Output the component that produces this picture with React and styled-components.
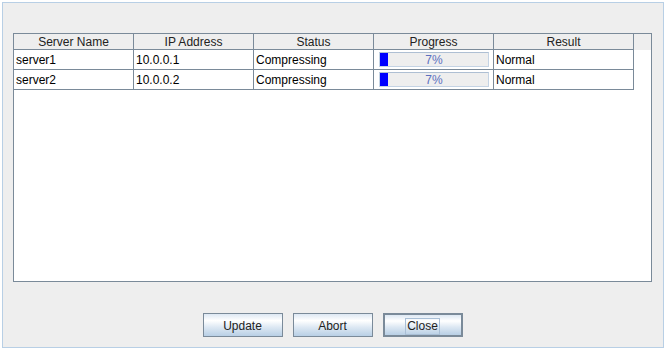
import React from 'react';
import styled, { createGlobalStyle } from 'styled-components';

const GlobalStyle = createGlobalStyle`
  html, body {
    margin: 0;
    padding: 0;
    background: #ffffff;
  }
  body {
    font-family: "Liberation Sans", Arial, sans-serif;
    font-size: 12px;
  }
`;

// the dialog frame with the light blue Metal edge
const Frame = styled.div`
  box-sizing: border-box;
  margin: 2px;
  width: 662px;
  height: 346px;
  border: 1px solid #b8cfe5;
  background: #eeeeee;
  padding: 30px 11px 10px 10px;
  display: flex;
  flex-direction: column;
`;

const ScrollPane = styled.div`
  box-sizing: border-box;
  width: 639px;
  height: 249px;
  border: 1px solid #7a8a99;
  background: #ffffff;
  display: flex;
  flex-direction: column;
`;

const HeaderRow = styled.div`
  display: flex;
  height: 16px;
  background: #eeeeee;
`;

const HeaderCell = styled.div`
  box-sizing: border-box;
  width: ${(p) => p.$w}px;
  height: 16px;
  border-right: 1px solid #7a8a99;
  border-bottom: 1px solid #7a8a99;
  display: flex;
  align-items: center;
  justify-content: center;
  padding-top: 1px;
  color: #222222;
  line-height: 14px;
`;

const Row = styled.div`
  display: flex;
  height: 20px;
`;

const Cell = styled.div`
  box-sizing: border-box;
  width: ${(p) => p.$w}px;
  height: 20px;
  border-right: 1px solid #7a8a99;
  border-bottom: 1px solid #7a8a99;
  display: flex;
  align-items: center;
  padding: 1px 0 0 2px;
  color: #000000;
  white-space: nowrap;
`;

const BarCell = styled(Cell)`
  padding: 0 0 0 5px;
`;

const Bar = styled.div`
  position: relative;
  box-sizing: border-box;
  width: 110px;
  height: 15px;
  border: 1px solid #c4d3e4;
  border-top-color: #aebfd3;
  background: #eeeeee;
  display: flex;
`;

const Fill = styled.div`
  height: 100%;
  background: #0000ff;
`;

// text sits over the fill, as Metal paints it
const BarText = styled.span`
  position: absolute;
  inset: 0;
  display: flex;
  align-items: center;
  justify-content: center;
  padding-top: 1px;
  color: #5d70c0;
  font-size: 12px;
`;

const ButtonBar = styled.div`
  margin-top: auto;
  display: flex;
  justify-content: center;
  gap: 10px;
`;

const Button = styled.button`
  box-sizing: border-box;
  width: 80px;
  height: 24px;
  margin: 0;
  padding: 2px 0 0;
  border: ${(p) => (p.$default ? '2px' : '1px')} solid #7a8a99;
  background: linear-gradient(#dde8f3 0%, #ffffff 30%, #dde8f3 60%, #b8cfe5 100%);
  font-family: "Liberation Sans", Arial, sans-serif;
  font-size: 12px;
  color: #222222;
  display: flex;
  align-items: center;
  justify-content: center;
`;

const Focus = styled.span`
  border: 1px solid #a9bfd6;
  padding: 0 1px;
  line-height: 15px;
`;

const columns = [
  { name: 'Server Name', w: 120 },
  { name: 'IP Address', w: 120 },
  { name: 'Status', w: 120 },
  { name: 'Progress', w: 120 },
  { name: 'Result', w: 140 },
];

const servers = [
  { name: 'server1', ip: '10.0.0.1', status: 'Compressing', progress: 7, result: 'Normal' },
  { name: 'server2', ip: '10.0.0.2', status: 'Compressing', progress: 7, result: 'Normal' },
];

function App() {
  return (
    <>
      <GlobalStyle />
      <Frame>
        <ScrollPane>
          <HeaderRow>
            {columns.map((c) => (
              <HeaderCell key={c.name} $w={c.w}>{c.name}</HeaderCell>
            ))}
          </HeaderRow>
          {servers.map((s) => (
            <Row key={s.name}>
              <Cell $w={120}>{s.name}</Cell>
              <Cell $w={120}>{s.ip}</Cell>
              <Cell $w={120}>{s.status}</Cell>
              <BarCell $w={120}>
                <Bar>
                  <Fill style={{ width: `${s.progress}%` }} />
                  <BarText>{s.progress}%</BarText>
                </Bar>
              </BarCell>
              <Cell $w={140}>{s.result}</Cell>
            </Row>
          ))}
        </ScrollPane>
        <ButtonBar>
          <Button>Update</Button>
          <Button>Abort</Button>
          <Button $default>
            <Focus>Close</Focus>
          </Button>
        </ButtonBar>
      </Frame>
    </>
  );
}

export default App;
